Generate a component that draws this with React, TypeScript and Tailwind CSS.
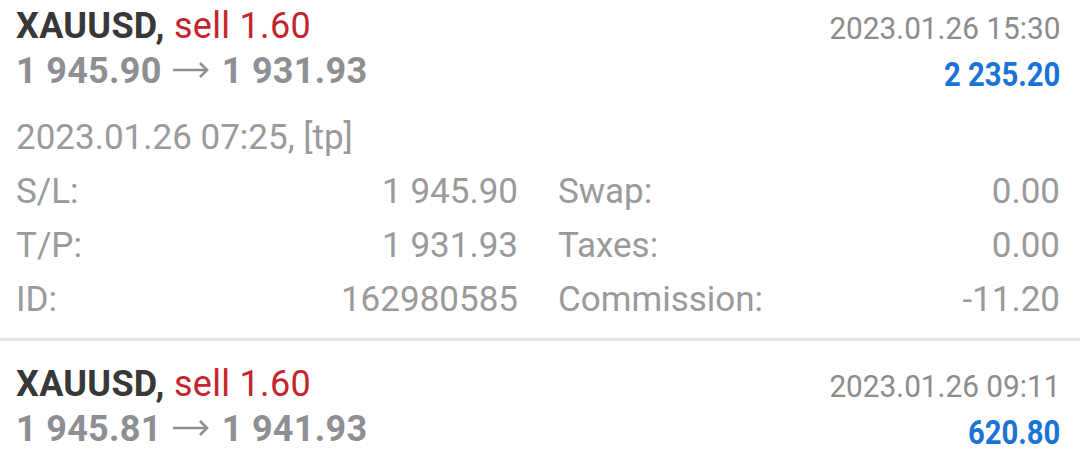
const deals = [
  {
    symbol: "XAUUSD",
    side: "sell 1.60",
    open: "1 945.90",
    close: "1 931.93",
    time: "2023.01.26 15:30",
    profit: "2 235.20",
    expanded: true,
  },
  {
    symbol: "XAUUSD",
    side: "sell 1.60",
    open: "1 945.81",
    close: "1 941.93",
    time: "2023.01.26 09:11",
    profit: "620.80",
    expanded: false,
  },
];

function Arrow() {
  return (
    <svg width="38" height="18" viewBox="0 0 38 18" className="ml-[10px] mr-[12px] inline-block align-[4px]" fill="none" stroke="currentColor" strokeWidth="2.6">
      <path d="M1 9h34" />
      <path d="M28 2l7 7-7 7" />
    </svg>
  );
}

function Row({ label, value }: { label: string; value: string }) {
  return (
    <div className="flex justify-between">
      <span>{label}</span>
      <span>{value}</span>
    </div>
  );
}

function Deal({ d }: { d: (typeof deals)[number] }) {
  return (
    <div className="pl-4 pr-5">
      <div className="flex justify-between">
        <div className="pt-[4px] text-[36px] font-bold leading-[45px] tracking-[0.3px]">
          <div className="whitespace-nowrap">
            <span className="text-[#383838]">{d.symbol},</span>{" "}
            <span className="font-normal text-[#c4252c]">{d.side}</span>
          </div>
          <div className="whitespace-nowrap text-[#8e8f93]">
            {d.open}
            <Arrow />
            {d.close}
          </div>
        </div>
        <div className="pt-[5px] text-right leading-[46px]">
          <div className="origin-right scale-x-[0.93] whitespace-nowrap text-[32px] text-[#8c8c8c]">{d.time}</div>
          <div className="origin-right scale-x-[0.86] whitespace-nowrap text-[34px] font-bold text-[#1a73d6]">{d.profit}</div>
        </div>
      </div>
      {d.expanded && (
        <div className="mt-[14px] pb-[11px] text-[35px] leading-[54px] text-[#9a9a9a]">
          <div>2023.01.26 07:25, [tp]</div>
          <div className="grid grid-cols-2 gap-x-10">
            <Row label="S/L:" value="1 945.90" />
            <Row label="Swap:" value="0.00" />
            <Row label="T/P:" value="1 931.93" />
            <Row label="Taxes:" value="0.00" />
            <Row label="ID:" value="162980585" />
            <Row label="Commission:" value="-11.20" />
          </div>
        </div>
      )}
    </div>
  );
}

export default function App() {
  return (
    <div className="h-[453px] w-[1080px] overflow-hidden bg-white font-['Roboto',sans-serif]">
      <Deal d={deals[0]} />
      <div className="mb-[17px] h-[3px] bg-[#e4e4e4]" />
      <Deal d={deals[1]} />
    </div>
  );
}
